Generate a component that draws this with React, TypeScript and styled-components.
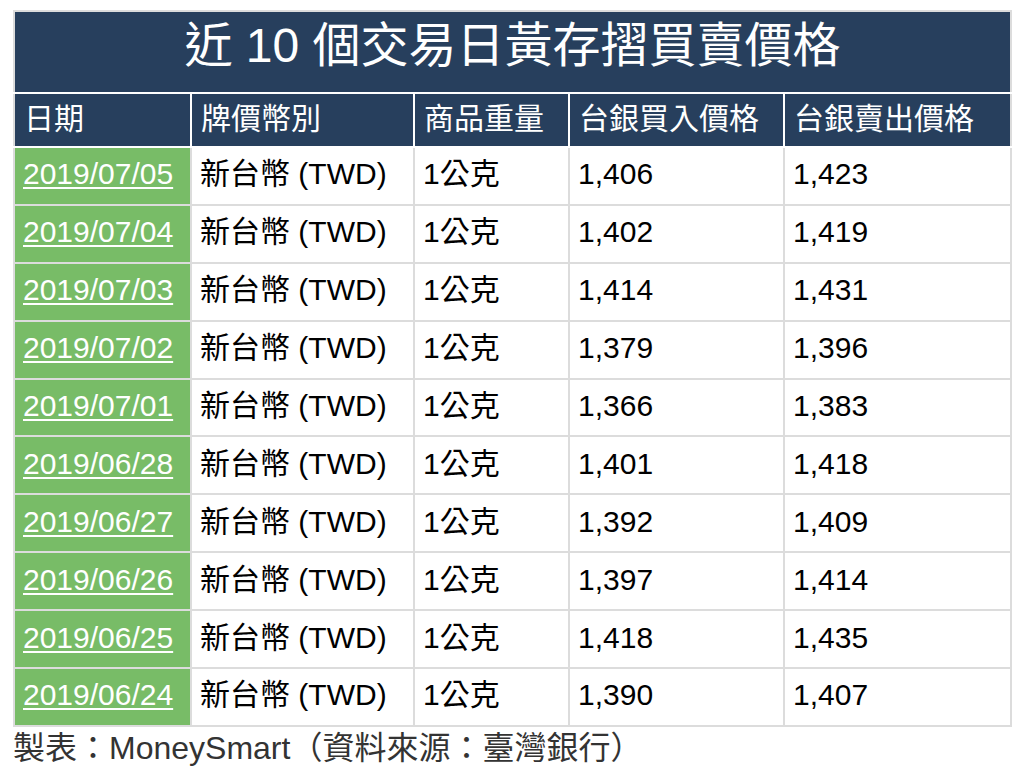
import styled, { createGlobalStyle } from "styled-components";

const rows = [
  ["2019/07/05", "1,406", "1,423"],
  ["2019/07/04", "1,402", "1,419"],
  ["2019/07/03", "1,414", "1,431"],
  ["2019/07/02", "1,379", "1,396"],
  ["2019/07/01", "1,366", "1,383"],
  ["2019/06/28", "1,401", "1,418"],
  ["2019/06/27", "1,392", "1,409"],
  ["2019/06/26", "1,397", "1,414"],
  ["2019/06/25", "1,418", "1,435"],
  ["2019/06/24", "1,390", "1,407"],
];

const headers = ["日期", "牌價幣別", "商品重量", "台銀買入價格", "台銀賣出價格"];
const widths = [177, 223, 155, 215, 227];

const GlobalStyle = createGlobalStyle`
  body {
    margin: 0;
    background: #fff;
    font-family: "Liberation Sans", "Noto Sans CJK TC", sans-serif;
  }
`;

const Page = styled.div`
  padding: 10px 10px 0 13px;
`;

const Table = styled.table`
  width: 997px;
  border-collapse: collapse;
  table-layout: fixed;
  border: 2px solid #dcdcdc;
`;

const TitleCell = styled.th`
  height: 68px;
  padding: 0 0 12px;
  background: #273f5d;
  color: #fff;
  font-family: "Liberation Sans", "Noto Sans CJK TC", sans-serif;
  font-size: 48px;
  line-height: 1;
  font-weight: normal;
  text-align: center;
  border: 2px solid #dcdcdc;
  border-bottom: 2px solid #fff;
`;

const HeadCell = styled.th`
  height: 50px;
  padding: 0 9px 2px;
  background: #273f5d;
  color: #fff;
  font-size: 30px;
  line-height: 1;
  font-weight: normal;
  text-align: left;
  border: 2px solid #fff;
  &:first-child {
    border-left-color: #dcdcdc;
  }
  &:last-child {
    border-right-color: #dcdcdc;
  }
`;

const Cell = styled.td<{ $green?: boolean }>`
  height: 52.9px;
  padding: 0 8px 3px;
  background: ${(p) => (p.$green ? "#78bc67" : "#fff")};
  color: #000;
  font-size: 30px;
  line-height: 1;
  white-space: nowrap;
  border: 2px solid #dcdcdc;
`;

const DateLink = styled.a`
  color: #fff;
  text-decoration: underline;
  text-decoration-thickness: 2px;
  text-underline-offset: 3px;
`;

const Footer = styled.div`
  font-family: "Liberation Sans", "Noto Sans CJK TC", sans-serif;
  font-size: 32px;
  line-height: 42px;
  color: #333;
`;

export default function App() {
  return (
    <>
      <GlobalStyle />
      <Page>
        <Table>
          <colgroup>
            {widths.map((w, i) => (
              <col key={i} style={{ width: w }} />
            ))}
          </colgroup>
          <thead>
            <tr>
              <TitleCell colSpan={5}>近 10 個交易日黃存摺買賣價格</TitleCell>
            </tr>
            <tr>
              {headers.map((h) => (
                <HeadCell key={h}>{h}</HeadCell>
              ))}
            </tr>
          </thead>
          <tbody>
            {rows.map(([date, buy, sell]) => (
              <tr key={date}>
                <Cell $green>
                  <DateLink href="#">{date}</DateLink>
                </Cell>
                <Cell>新台幣 (TWD)</Cell>
                <Cell>1公克</Cell>
                <Cell>{buy}</Cell>
                <Cell>{sell}</Cell>
              </tr>
            ))}
          </tbody>
        </Table>
        <Footer>製表：MoneySmart（資料來源：臺灣銀行）</Footer>
      </Page>
    </>
  );
}
